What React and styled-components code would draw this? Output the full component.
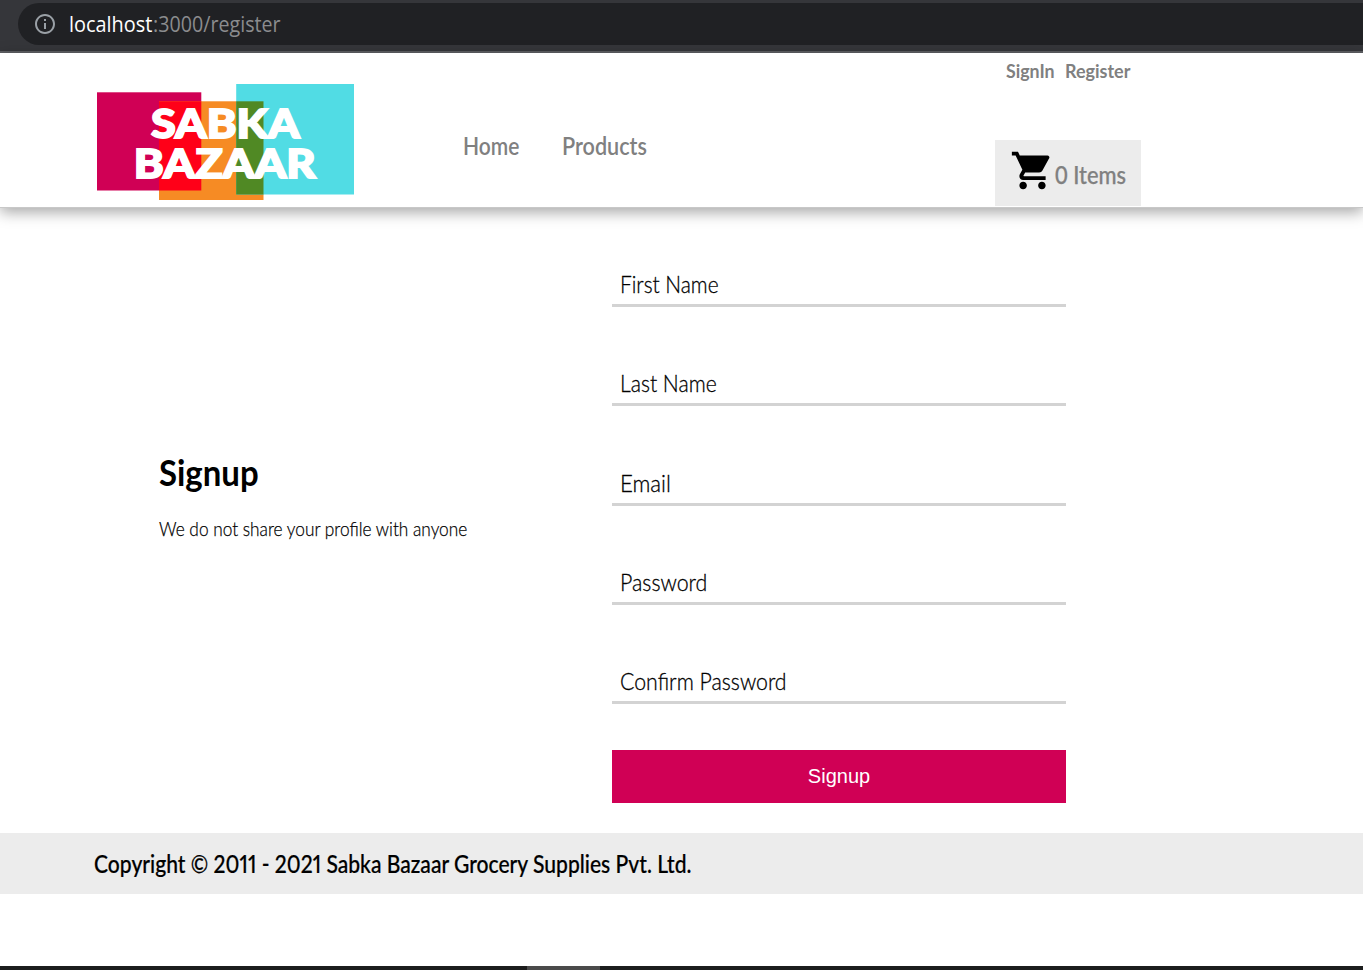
import React from "react";
import styled, { createGlobalStyle } from "styled-components";
import { MdInfoOutline, MdShoppingCart } from "react-icons/md";

const GlobalStyle = createGlobalStyle`
  *, *::before, *::after { box-sizing: border-box; }
  body {
    margin: 0;
    background: #fff;
    color: #000;
    font-family: Lato, "Open Sans", sans-serif;
    overflow: hidden;
  }
`;

const Page = styled.div`
  display: flex;
  flex-direction: column;
  height: 970px;
`;

/* Condensed lettering: the box takes the narrowed width in the flow. */
const Condensed = styled.span`
  display: block;
  width: ${(p) => p.$width}px;
  white-space: nowrap;
  transform: scaleX(${(p) => p.$squeeze});
  transform-origin: 0 50%;
`;

const AddressBar = styled.div`
  flex: none;
  height: 53px;
  padding: 3px 0 0 18px;
  background: #35363a;
  border-bottom: 2px solid #5f6064;
`;

const AddressField = styled.div`
  display: flex;
  align-items: center;
  height: 42px;
  padding-left: 15px;
  border-radius: 21px 0 0 21px;
  background: #202124;
  color: #9aa0a6;
  font: 400 21px/42px "Open Sans", sans-serif;
`;

const InfoIcon = styled(MdInfoOutline)`
  width: 24px;
  height: 24px;
  margin: 0 12px 0 0;
`;

const Host = styled(Condensed)`
  color: #fff;
`;

const Path = styled(Condensed)`
  color: #8b8c8e;
`;

const Header = styled.header`
  flex: none;
  display: flex;
  align-items: flex-start;
  height: 155px;
  padding-left: 97px;
  background: #fff;
  border-bottom: 1px solid #c8c8c8;
  box-shadow: 0 4px 14px rgba(0, 0, 0, 0.36);
`;

const Logo = styled.svg`
  display: block;
  width: 258px;
  height: 116px;
  margin-top: 31px;
`;

const Nav = styled.nav`
  display: flex;
  gap: 43px;
  margin: 78px 0 0 108px;
  color: #808080;
  font-size: 24px;
  font-weight: 600;
  line-height: 30px;
`;

const Account = styled.div`
  display: flex;
  flex-direction: column;
  width: 146px;
  margin-left: 348px;
  color: #808080;
`;

const AccountLinks = styled.div`
  display: flex;
  gap: 11px;
  height: 87px;
  padding: 6px 0 0 11px;
  font-size: 19px;
  font-weight: 700;
  line-height: 24px;
`;

const CartButton = styled.div`
  display: flex;
  height: 66px;
  padding: 8px 0 0 15px;
  background: #ececec;
  font-size: 24px;
  font-weight: 500;
`;

const CartIcon = styled(MdShoppingCart)`
  flex: none;
  width: 45px;
  height: 45px;
  color: #000;
`;

const CartCount = styled(Condensed)`
  padding-top: 12px;
  line-height: 30px;
  -webkit-text-stroke: 0.25px currentColor;
`;

const Main = styled.main`
  display: grid;
  grid-template-columns: 453px 454px;
  height: 625px;
  padding: 61px 0 0 159px;
`;

const Intro = styled.section`
  padding-top: 181px;
`;

const Title = styled.h1`
  margin: 0 0 22px;
  font-size: 36px;
  font-weight: 700;
  line-height: 44px;
`;

const Note = styled.p`
  margin: 0;
  font-size: 20px;
  font-weight: 300;
  line-height: 24px;
  -webkit-text-stroke: 0.25px #000;
`;

const Form = styled.div`
  display: flex;
  flex-direction: column;
`;

const Field = styled.label`
  display: block;
  height: 38px;
  margin-bottom: 61.25px;
  padding-left: 7.5px;
  border-bottom: 3px solid #d3d3d3;
  font-size: 24px;
  font-weight: 300;
  line-height: 30px;
  -webkit-text-stroke: 0.3px #000;

  &:last-of-type {
    margin-bottom: 46px;
  }
`;

const SubmitButton = styled.button`
  height: 53px;
  padding: 0;
  border: 0;
  background: #d00055;
  color: #fff;
  font: 400 20px "Liberation Sans", Arial, sans-serif;
`;

const Footer = styled.footer`
  flex: none;
  height: 61px;
  padding-left: 94px;
  background: #ececec;
  font-size: 24px;
  font-weight: 500;
  line-height: 62px;
  font-variant-numeric: proportional-nums;
  -webkit-text-stroke: 0.2px #000;
`;

const Taskbar = styled.div`
  height: 4px;
  margin-top: auto;
  padding-left: 527px;
  background: #1c1d1d;
`;

const ActiveTask = styled.div`
  width: 73px;
  height: 4px;
  background: #4a4a4a;
`;

const fields = [
  { label: "First Name", width: 98, squeeze: 0.87 },
  { label: "Last Name", width: 96, squeeze: 0.88 },
  { label: "Email", width: 50, squeeze: 0.925 },
  { label: "Password", width: 87, squeeze: 0.89 },
  { label: "Confirm Password", width: 166, squeeze: 0.887 },
];

function SabkaLogo() {
  return (
    <Logo viewBox="0 0 258 116" role="img" aria-label="Sabka Bazaar">
      <rect x="0" y="8.3" width="104.3" height="98.2" fill="#d00055" />
      <rect x="62" y="17.3" width="104.5" height="98.7" fill="#f68b24" />
      <rect x="139.2" y="0" width="117.8" height="110.5" fill="#51dce4" />
      <rect x="62" y="17.3" width="42.3" height="89.2" fill="#ff0018" />
      <rect x="139.2" y="17.3" width="27.3" height="93.2" fill="#508924" />
      <g
        fill="#fff"
        stroke="#fff"
        strokeWidth="1.8"
        fontFamily="Lato, sans-serif"
        fontWeight="900"
        fontSize="40.5"
      >
        <text x="54" y="54.2" textLength="148.5" lengthAdjust="spacingAndGlyphs">SABKA</text>
        <text x="36.8" y="93.8" textLength="182" lengthAdjust="spacingAndGlyphs">BAZAAR</text>
      </g>
    </Logo>
  );
}

export default function App() {
  return (
    <Page>
      <GlobalStyle />
      <AddressBar>
        <AddressField>
          <InfoIcon />
          <Host $width={83.5} $squeeze={0.947}>localhost</Host>
          <Path $width={128} $squeeze={0.937}>:3000/register</Path>
        </AddressField>
      </AddressBar>
      <Header>
        <SabkaLogo />
        <Nav>
          <Condensed $width={56} $squeeze={0.875}>Home</Condensed>
          <Condensed $width={85} $squeeze={0.9}>Products</Condensed>
        </Nav>
        <Account>
          <AccountLinks>
            <Condensed $width={48} $squeeze={0.935}>SignIn</Condensed>
            <Condensed $width={65} $squeeze={0.945}>Register</Condensed>
          </AccountLinks>
          <CartButton>
            <CartIcon />
            <CartCount $width={71} $squeeze={0.91}>0 Items</CartCount>
          </CartButton>
        </Account>
      </Header>
      <Main>
        <Intro>
          <Title>
            <Condensed $width={99} $squeeze={0.915}>Signup</Condensed>
          </Title>
          <Note>
            <Condensed $width={308} $squeeze={0.863}>
              We do not share your profile with anyone
            </Condensed>
          </Note>
        </Intro>
        <Form>
          {fields.map((f) => (
            <Field key={f.label}>
              <Condensed $width={f.width} $squeeze={f.squeeze}>{f.label}</Condensed>
            </Field>
          ))}
          <SubmitButton>Signup</SubmitButton>
        </Form>
      </Main>
      <Footer>
        <Condensed $width={597} $squeeze={0.878}>
          Copyright © 2011 - 2021 Sabka Bazaar Grocery Supplies Pvt. Ltd.
        </Condensed>
      </Footer>
      <Taskbar>
        <ActiveTask />
      </Taskbar>
    </Page>
  );
}
